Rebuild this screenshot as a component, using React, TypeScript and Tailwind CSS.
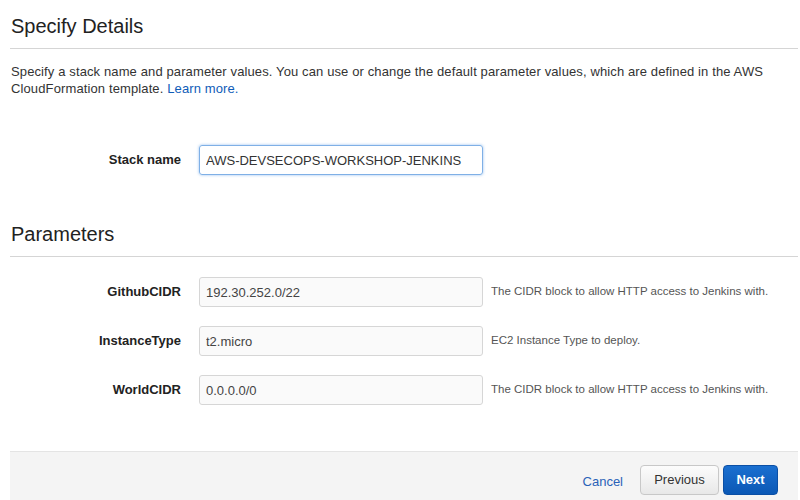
import React, { useState } from 'react';

const params = [
  { name: 'GithubCIDR', value: '192.30.252.0/22', help: 'The CIDR block to allow HTTP access to Jenkins with.' },
  { name: 'InstanceType', value: 't2.micro', help: 'EC2 Instance Type to deploy.' },
  { name: 'WorldCIDR', value: '0.0.0.0/0', help: 'The CIDR block to allow HTTP access to Jenkins with.' },
];

const App = () => {
  const [stackName, setStackName] = useState('AWS-DEVSECOPS-WORKSHOP-JENKINS');
  const [values, setValues] = useState<Record<string, string>>(
    Object.fromEntries(params.map((p) => [p.name, p.value]))
  );

  return (
    <div className="w-[800px] h-[500px] bg-white pl-[10px] pr-[2px] overflow-hidden text-[#333] font-['Liberation_Sans',Arial,sans-serif]">
      <h1 className="text-[20px] leading-[24px] pt-[14px] pb-[10px] pl-[1px] text-[#222]">Specify Details</h1>
      <div className="h-px bg-[#d5d5d5]" />
      <p className="text-[13px] leading-[17px] mt-[14px] pl-[1px] tracking-[0.12px] text-[#333]">
        Specify a stack name and parameter values. You can use or change the default parameter values, which are defined in the AWS CloudFormation template. <a href="#" className="text-[#0f5cb8]">Learn more.</a>
      </p>

      <div className="flex items-center mt-[48px]">
        <label className="w-[171px] text-right text-[13px] font-bold text-[#222]">Stack name</label>
        <input
          value={stackName}
          onChange={(e) => setStackName(e.target.value)}
          className="ml-[18px] w-[284px] h-[30px] px-[6px] text-[13px] text-[#333] border border-[#7fb0e6] rounded-[3px] shadow-[0_0_3px_rgba(80,150,230,0.6)] outline-none"
        />
      </div>

      <h2 className="text-[20px] leading-[24px] mt-[47px] pb-[10px] pl-[1px] text-[#222]">Parameters</h2>
      <div className="h-px bg-[#d5d5d5]" />

      <div className="flex flex-col gap-[19px] mt-[20px]">
        {params.map((p) => (
          <div key={p.name} className="flex items-center">
            <label className="w-[171px] text-right text-[13px] font-bold text-[#222]">{p.name}</label>
            <input
              value={values[p.name]}
              onChange={(e) => setValues({ ...values, [p.name]: e.target.value })}
              className="ml-[18px] w-[284px] h-[30px] px-[6px] text-[13px] text-[#444] bg-[#fafafa] border border-[#d6d6d6] rounded-[3px] outline-none"
            />
            <span className="ml-[8px] text-[11.5px] text-[#555]">{p.help}</span>
          </div>
        ))}
      </div>

      <div className="mt-[46px] h-[49px] bg-[#f4f4f4] border-t border-[#e4e4e4] flex items-start justify-end pt-[13px] pr-[20px]">
        <a href="#" className="text-[13px] text-[#2a62b8] mr-[17px] mt-[7px]">Cancel</a>
        <button className="h-[30px] w-[79px] text-[13px] text-[#333] rounded-[4px] border border-[#c8c8c8] bg-gradient-to-b from-[#fcfcfc] to-[#e8e8e8]">Previous</button>
        <button className="ml-[4px] h-[30px] w-[55px] text-[13px] font-bold text-white rounded-[4px] border border-[#0b4fa5] bg-gradient-to-b from-[#1a6fd0] to-[#0b58b5]">Next</button>
      </div>
    </div>
  );
};

export default App;
